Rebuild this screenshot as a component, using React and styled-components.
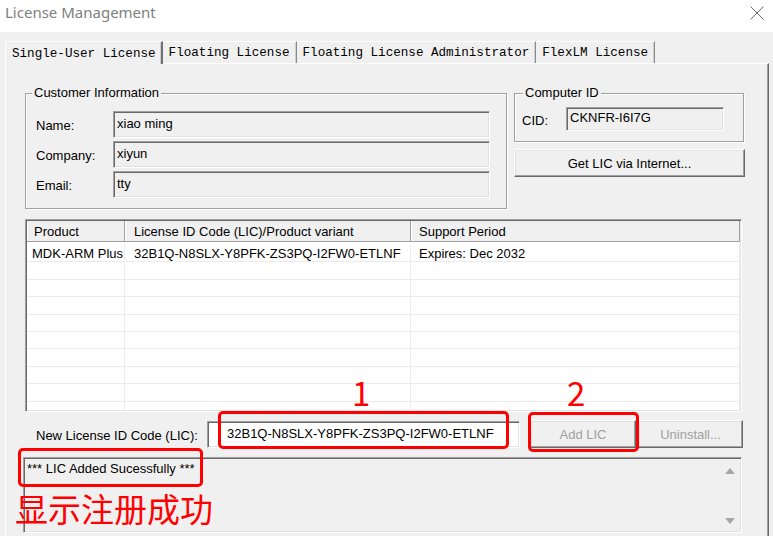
import React from 'react';
import styled, { createGlobalStyle, css } from 'styled-components';

const GlobalStyle = createGlobalStyle`
  html, body {
    margin: 0;
    padding: 0;
  }
  body {
    width: 773px;
    height: 536px;
    overflow: hidden;
    background: #f0f0f0;
    font-family: "Liberation Sans", Arial, sans-serif;
    font-size: 13px;
    color: #000;
  }
`;

const sunken = css`
  box-sizing: border-box;
  border-style: solid;
  border-width: 1px;
  border-color: #a0a0a0 #ffffff #ffffff #a0a0a0;
  box-shadow: inset 1px 1px 0 #696969, inset -1px -1px 0 #e3e3e3;
`;

const raised = css`
  box-sizing: border-box;
  border-style: solid;
  border-width: 1px;
  border-color: #ffffff #696969 #696969 #ffffff;
  box-shadow: inset -1px -1px 0 #a0a0a0, inset 1px 1px 0 #e3e3e3;
`;

const Window = styled.div`
  position: relative;
  width: 773px;
  height: 536px;
  overflow: hidden;
  background: #f0f0f0;
  display: flex;
  flex-direction: column;
`;

const TitleBar = styled.div`
  height: 32px;
  flex: none;
  background: #ffffff;
  display: flex;
  justify-content: space-between;
  align-items: flex-start;
  padding: 3px 8px 0 5px;
  box-sizing: border-box;
`;

const Title = styled.div`
  font-family: "Noto Sans", "Open Sans", sans-serif;
  font-size: 15px;
  line-height: 18px;
  color: #808080;
`;

const CloseBox = styled.div`
  width: 16px;
  height: 16px;
  margin-top: 2px;
`;

const TabStrip = styled.div`
  height: 31px;
  flex: none;
  display: flex;
  align-items: flex-end;
  padding-left: 5px;
  position: relative;
  z-index: 2;
`;

const Tab = styled.div`
  height: 21px;
  line-height: 22px;
  padding: 0 6px;
  font-family: "Liberation Mono", "Courier New", monospace;
  font-size: 12.6px;
  color: #000;
  white-space: nowrap;
  border-top: 1px solid #ffffff;
  border-right: 1px solid #8a8a8a;
  box-shadow: inset -1px 0 0 #d0d0d0;
  ${p => p.$active && css`
    height: 22px;
    line-height: 24px;
    margin-bottom: -1px;
    background: #f0f0f0;
    border-left: 1px solid #ffffff;
    border-right: 2px solid #707070;
    padding-right: 5px;
  `}
`;

const Panel = styled.div`
  flex: 1;
  margin-left: 5px;
  width: 764px;
  box-sizing: border-box;
  border-top: 1px solid #ffffff;
  border-left: 1px solid #ffffff;
  border-right: 1px solid #696969;
  box-shadow: inset -1px 0 0 #a0a0a0;
  display: flex;
  flex-direction: column;
`;

const TopSection = styled.div`
  display: flex;
  align-items: flex-start;
  gap: 7px;
  margin: 29px 0 0 19px;
`;

const Group = styled.div`
  box-sizing: border-box;
  width: ${p => p.$width}px;
  border: 1px solid #a0a0a0;
  box-shadow: 1px 1px 0 #ffffff, inset 1px 1px 0 #ffffff;
  padding: 0 0 10px ${p => p.$padLeft}px;
`;

const Legend = styled.div`
  width: fit-content;
  margin: -9px 0 0 ${p => p.$offset}px;
  padding: 0 2px;
  line-height: 16px;
  background: #f0f0f0;
`;

const FieldRows = styled.div`
  display: flex;
  flex-direction: column;
  gap: 3px;
  margin-top: ${p => p.$top}px;
`;

const FieldRow = styled.div`
  display: flex;
  align-items: center;
`;

const Label = styled.div`
  width: ${p => p.$width}px;
  flex: none;
  padding-top: 2px;
  white-space: nowrap;
`;

const Field = styled.div`
  ${sunken};
  width: ${p => p.$width}px;
  height: ${p => p.$height}px;
  line-height: ${p => p.$height - 4}px;
  padding-left: ${p => p.$pad ?? 3}px;
  background: ${p => (p.$white ? '#ffffff' : '#f0f0f0')};
  white-space: nowrap;
  overflow: hidden;
`;

const RightColumn = styled.div`
  width: 231px;
  display: flex;
  flex-direction: column;
`;

const Button = styled.div`
  ${raised};
  width: ${p => p.$width}px;
  height: 28px;
  line-height: 27px;
  text-align: center;
  background: #f0f0f0;
  color: ${p => (p.$disabled ? '#a0a0a0' : '#000')};
  margin-top: ${p => p.$top || 0}px;
  margin-left: ${p => p.$left || 0}px;
  flex: none;
`;

const ListView = styled.div`
  ${sunken};
  width: 717px;
  height: 193px;
  margin: 10px 0 0 19px;
  background: #ffffff;
  overflow: hidden;
  padding: 1px;
`;

const HeaderRow = styled.div`
  display: grid;
  grid-template-columns: 98px 286px 1fr;
  height: 20px;
  background: #f0f0f0;
  border-bottom: 1px solid #a0a0a0;
  box-shadow: 0 1px 0 #ffffff;
`;

const HeaderCell = styled.div`
  line-height: 22px;
  height: 20px;
  padding-left: ${p => p.$pad}px;
  border-right: 1px solid #a0a0a0;
  box-shadow: inset 1px 0 0 #ffffff;
  white-space: nowrap;
`;

const Rows = styled.div`
  padding-top: 3px;
`;

const Row = styled.div`
  display: grid;
  grid-template-columns: 98px 286px 1fr;
  height: 17.4px;
`;

const Cell = styled.div`
  box-sizing: border-box;
  line-height: 18px;
  padding-left: ${p => p.$pad}px;
  border-bottom: 1px solid #ececec;
  border-right: 1px solid #ececec;
  white-space: nowrap;
  overflow: hidden;
`;

const BottomRow = styled.div`
  display: flex;
  align-items: flex-start;
  margin: 8px 0 0 30px;
  height: 28px;
`;

const BottomLabel = styled.div`
  width: 171px;
  flex: none;
  line-height: 31px;
  white-space: nowrap;
`;

const NewLicField = styled(Field)`
  margin-top: 1px;
`;

const StatusBox = styled.div`
  ${sunken};
  width: 719px;
  height: 76px;
  margin: 9px 0 0 17px;
  background: #f0f0f0;
  display: flex;
`;

const StatusText = styled.div`
  flex: 1;
  padding: 3px 0 0 3px;
  line-height: 16px;
  white-space: nowrap;
`;

const ScrollBar = styled.div`
  width: 19px;
  margin-right: 2px;
  display: flex;
  flex-direction: column;
  justify-content: space-between;
  align-items: center;
  padding: 10px 0 8px;
`;

const Arrow = styled.div`
  width: 0;
  height: 0;
  border-left: 5px solid transparent;
  border-right: 5px solid transparent;
  ${p => (p.$down
    ? css`border-top: 6px solid #a6a6a6;`
    : css`border-bottom: 6px solid #a6a6a6;`)}
`;

const Mark = styled.div`
  position: absolute;
  box-sizing: border-box;
  left: ${p => p.$x}px;
  top: ${p => p.$y}px;
  width: ${p => p.$w}px;
  height: ${p => p.$h}px;
  border: 3px solid #ff0000;
  border-radius: 5px;
  pointer-events: none;
`;

const Note = styled.div`
  position: absolute;
  left: ${p => p.$x}px;
  top: ${p => p.$y}px;
  font-family: "Noto Sans CJK SC", "Noto Sans", sans-serif;
  font-size: 33px;
  line-height: 33px;
  color: #ff0000;
  white-space: nowrap;
`;

const customer = [
  ['Name:', 'xiao ming'],
  ['Company:', 'xiyun'],
  ['Email:', 'tty'],
];

const tabs = ['Single-User License', 'Floating License', 'Floating License Administrator', 'FlexLM License'];

function App() {
  return (
    <Window>
      <GlobalStyle />
      <TitleBar>
        <Title>License Management</Title>
        <CloseBox>
          <svg width="16" height="16" viewBox="0 0 16 16">
            <path d="M1.5 1.5 L14.5 14.5 M14.5 1.5 L1.5 14.5" stroke="#6a6a6a" strokeWidth="1" fill="none" />
          </svg>
        </CloseBox>
      </TitleBar>

      <TabStrip>
        {tabs.map((t, i) => (
          <Tab key={t} $active={i === 0}>{t}</Tab>
        ))}
      </TabStrip>

      <Panel>
        <TopSection>
          <Group $width={482} $padLeft={10}>
            <Legend $offset={-4}>Customer Information</Legend>
            <FieldRows $top={10}>
              {customer.map(([label, value]) => (
                <FieldRow key={label}>
                  <Label $width={77}>{label}</Label>
                  <Field $width={377} $height={27}>{value}</Field>
                </FieldRow>
              ))}
            </FieldRows>
          </Group>

          <RightColumn>
            <Group $width={230} $padLeft={7}>
              <Legend $offset={1}>Computer ID</Legend>
              <FieldRows $top={6}>
                <FieldRow>
                  <Label $width={44}>CID:</Label>
                  <Field $width={158} $height={24}>CKNFR-I6I7G</Field>
                </FieldRow>
              </FieldRows>
            </Group>
            <Button $width={231} $top={7}>Get LIC via Internet...</Button>
          </RightColumn>
        </TopSection>

        <ListView>
          <HeaderRow>
            <HeaderCell $pad={7}>Product</HeaderCell>
            <HeaderCell $pad={9}>License ID Code (LIC)/Product variant</HeaderCell>
            <HeaderCell $pad={8}>Support Period</HeaderCell>
          </HeaderRow>
          <Rows>
            <Row>
              <Cell $pad={5}>MDK-ARM Plus</Cell>
              <Cell $pad={9}>32B1Q-N8SLX-Y8PFK-ZS3PQ-I2FW0-ETLNF</Cell>
              <Cell $pad={8}>Expires: Dec 2032</Cell>
            </Row>
            {Array.from({ length: 9 }).map((_, i) => (
              <Row key={i}>
                <Cell />
                <Cell />
                <Cell />
              </Row>
            ))}
          </Rows>
        </ListView>

        <BottomRow>
          <BottomLabel>New License ID Code (LIC):</BottomLabel>
          <NewLicField $width={313} $height={27} $pad={19} $white>
            32B1Q-N8SLX-Y8PFK-ZS3PQ-I2FW0-ETLNF
          </NewLicField>
          <Button $width={106} $left={10} $disabled>Add LIC</Button>
          <Button $width={105} $left={2} $disabled>Uninstall...</Button>
        </BottomRow>

        <StatusBox>
          <StatusText>*** LIC Added Sucessfully ***</StatusText>
          <ScrollBar>
            <Arrow />
            <Arrow $down />
          </ScrollBar>
        </StatusBox>
      </Panel>

      <Mark $x={218} $y={411} $w={291} $h={38} />
      <Mark $x={528} $y={412} $w={111} $h={40} />
      <Mark $x={18} $y={448} $w={185} $h={39} />
      <Note $x={352} $y={376}>1</Note>
      <Note $x={567} $y={376}>2</Note>
      <Note $x={15} $y={492}>显示注册成功</Note>
    </Window>
  );
}

export default App;
